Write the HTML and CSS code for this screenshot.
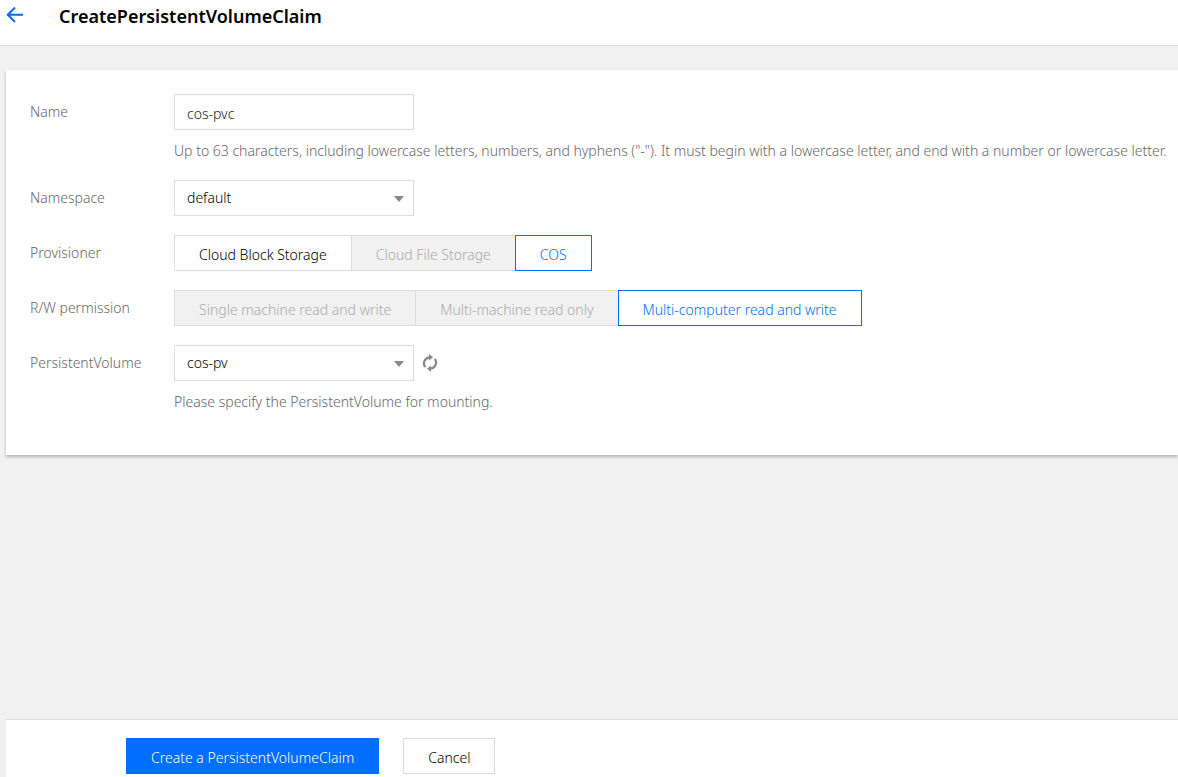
FILE: index.html
```html
<!DOCTYPE html>
<html lang="en">
<head>
<meta charset="utf-8">
<meta name="viewport" content="width=device-width, initial-scale=1">
<title>CreatePersistentVolumeClaim</title>
<link rel="stylesheet" href="styles.css">
</head>
<body>
<header class="header">
  <a class="back" href="#" aria-label="Back">
    <svg width="18" height="18" viewBox="0 0 18 18" fill="none" stroke="currentColor" stroke-width="2"><path d="M9 1.500 1.800 8.800 9 16M2 8.800h15"/></svg>
  </a>
  <h1 class="title">CreatePersistentVolumeClaim</h1>
</header>
<form class="page">
  <main class="panel">
    <div class="row">
      <label class="label" for="name">Name</label>
      <div class="field">
        <input class="control" id="name" type="text" value="cos-pvc">
        <p class="help">Up to 63 characters, including lowercase letters, numbers, and hyphens ("-"). It must begin with a lowercase letter, and end with a number or lowercase letter.</p>
      </div>
    </div>
    <div class="row">
      <label class="label" for="namespace">Namespace</label>
      <div class="field">
        <div class="select">
          <select class="control control-select" id="namespace"><option>default</option></select>
          <svg class="caret" width="10" height="6" viewBox="0 0 10 6" fill="currentColor"><path d="M0 0h10L5 6z"/></svg>
        </div>
      </div>
    </div>
    <div class="row">
      <span class="label" id="provisioner">Provisioner</span>
      <div class="field segments" role="group" aria-labelledby="provisioner">
        <button class="button" type="button">Cloud Block Storage</button>
        <button class="button" type="button" disabled>Cloud File Storage</button>
        <button class="button selected" type="button" aria-pressed="true">COS</button>
      </div>
    </div>
    <div class="row">
      <span class="label" id="permission">R/W permission</span>
      <div class="field segments" role="group" aria-labelledby="permission">
        <button class="button" type="button" disabled>Single machine read and write</button>
        <button class="button" type="button" disabled>Multi-machine read only</button>
        <button class="button selected" type="button" aria-pressed="true">Multi-computer read and write</button>
      </div>
    </div>
    <div class="row">
      <label class="label" for="volume">PersistentVolume</label>
      <div class="field">
        <div class="inline">
          <div class="select">
            <select class="control control-select" id="volume"><option>cos-pv</option></select>
            <svg class="caret" width="10" height="6" viewBox="0 0 10 6" fill="currentColor"><path d="M0 0h10L5 6z"/></svg>
          </div>
          <button class="refresh" type="button" aria-label="Refresh">
            <svg width="16" height="18" viewBox="0 0 16 18" fill="none" stroke="currentColor" stroke-width="2.200"><path d="M3.200 13.200A6.200 6.200 0 0 1 8 3.300M12.800 4.800A6.200 6.200 0 0 1 8 14.700"/><path d="M7 0v6.600l4-3.300zM9 18v-6.600l-4 3.300z" fill="currentColor" stroke="none"/></svg>
          </button>
        </div>
        <p class="help">Please specify the PersistentVolume for mounting.</p>
      </div>
    </div>
  </main>
  <footer class="footer">
    <button class="button primary" type="submit">Create a PersistentVolumeClaim</button>
    <button class="button" type="button">Cancel</button>
  </footer>
</form>
</body>
</html>
```
FILE: styles.css
```css
* {
  box-sizing: border-box;
}

body {
  margin: 0;
  min-height: 100vh;
  display: flex;
  flex-direction: column;
  overflow-x: hidden;
  background: #f1f1f1;
  color: #000;
  font: 300 14px/20px "Noto Sans", "Open Sans", sans-serif;
}

.header {
  display: flex;
  gap: 35px;
  height: 46px;
  padding: 6px 6px 0;
  background: #fff;
  border-bottom: 1px solid #ddd;
}

.back {
  width: 18px;
  height: 18px;
  color: #006eff;
}

.back svg,
.refresh svg {
  display: block;
}

.title {
  margin: 0;
  font-size: 18px;
  line-height: 20px;
  font-weight: 600;
}

.page {
  flex: 1;
  display: flex;
  flex-direction: column;
  justify-content: space-between;
  padding: 24px 0 0 6px;
}

.panel {
  display: flex;
  flex-direction: column;
  gap: 19px;
  padding: 24px 0 43px 24px;
  background: #fff;
  box-shadow: 0 2px 3px rgba(0, 0, 0, 0.25);
}

.row {
  display: flex;
}

.label {
  flex: none;
  width: 144px;
  line-height: 36px;
  color: #666;
}

.field {
  flex: 1;
  min-width: 0;
}

.control {
  display: block;
  width: 240px;
  height: 36px;
  padding: 2px 12px 0;
  border: 1px solid #ddd;
  border-radius: 0;
  background: #fff;
  color: #222;
  font: inherit;
}

.control-select {
  appearance: none;
  padding-top: 0;
  color: #000;
}

.help {
  margin: 11px 0 0;
  line-height: 20px;
  color: #666;
}

.select {
  position: relative;
  width: 240px;
}

.caret {
  position: absolute;
  top: 16px;
  right: 10px;
  color: #888;
  pointer-events: none;
}

.inline {
  display: flex;
  align-items: center;
  gap: 8px;
}

.refresh {
  padding: 0;
  border: 0;
  background: none;
  color: #888;
}

.segments {
  display: flex;
}

.segments .button + .button {
  margin-left: -1px;
}

.button {
  height: 36px;
  padding: 4px 24px 0;
  border: 1px solid #ddd;
  background: #fff;
  color: #000;
  font: inherit;
  white-space: nowrap;
}

.button:disabled {
  background: #f1f1f1;
  color: #aaa;
}

.button.selected {
  border-color: #006eff;
  color: #006eff;
}

.button.primary {
  border-color: #006eff;
  background: #006eff;
  color: #fff;
}

.footer {
  display: flex;
  gap: 24px;
  padding: 18px 24px 3px 120px;
  border-top: 1px solid #ddd;
  background: #fff;
}
```
